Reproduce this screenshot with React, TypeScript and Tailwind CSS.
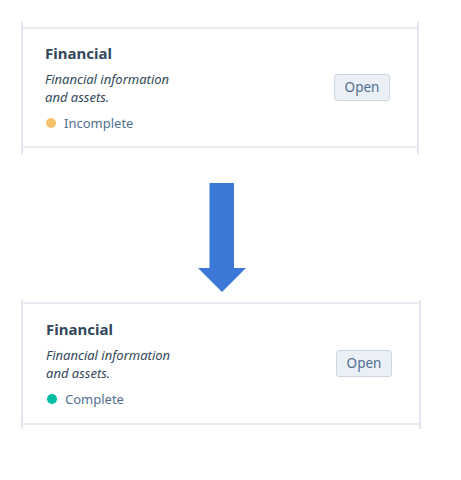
import React from "react";

type Status = "incomplete" | "complete";

function SectionCard({ status, shift }: { status: Status; shift?: boolean }) {
  const dot = status === "complete" ? "bg-[#00bda5]" : "bg-[#f5c26b]";
  const label = status === "complete" ? "Complete" : "Incomplete";
  return (
    <div
      className={`border-x-2 border-[#e3e7ef] ${
        shift ? "ml-[21px] w-[400px] pt-[2px] pb-[4px]" : "ml-[21px] w-[398px] pt-[5px] pb-[6px]"
      }`}
    >
      <div
        className={`flex items-center justify-between border-y-2 border-[#e9ecf2] bg-white ${
          shift ? "pl-[23px] pr-[27px]" : "pl-[22px] pr-[27px]"
        }`}
      >
        <div className={shift ? "pt-[15px] pb-[15px]" : "pt-[14px] pb-[14px]"}>
          <h3 className="text-[15px] leading-5 font-bold text-[#33475b]">Financial</h3>
          <p className="mt-[7px] text-[13px] leading-[18px] italic text-[#33475b]">
            Financial information
            <br />
            and assets.
          </p>
          <div className="mt-[8px] flex items-center gap-[8px] text-[13px] leading-[18px] text-[#516f90]">
            <span className={`ml-px h-[10px] w-[10px] rounded-full ${dot}`} />
            {label}
          </div>
        </div>
        <button className="h-[27px] w-[56px] rounded-[3px] border border-[#cbd6e2] bg-[#eaf0f6] text-[13.5px] text-[#506e91]">
          Open
        </button>
      </div>
    </div>
  );
}

export default function App() {
  return (
    <div
      className="h-[480px] w-[461px] bg-white pt-[22px]"
      style={{ fontFamily: "'Noto Sans', 'Liberation Sans', sans-serif" }}
    >
      <SectionCard status="incomplete" />

      {/* arrow */}
      <div className="mt-[29px] ml-[197px]">
        <svg width="50" height="110" viewBox="0 0 50 110">
          <path d="M12.5 0H37V85H49L25 109L1 85H12.5Z" fill="#3b78d8" />
        </svg>
      </div>

      <div className="mt-[7px]">
        <SectionCard status="complete" shift />
      </div>
    </div>
  );
}
